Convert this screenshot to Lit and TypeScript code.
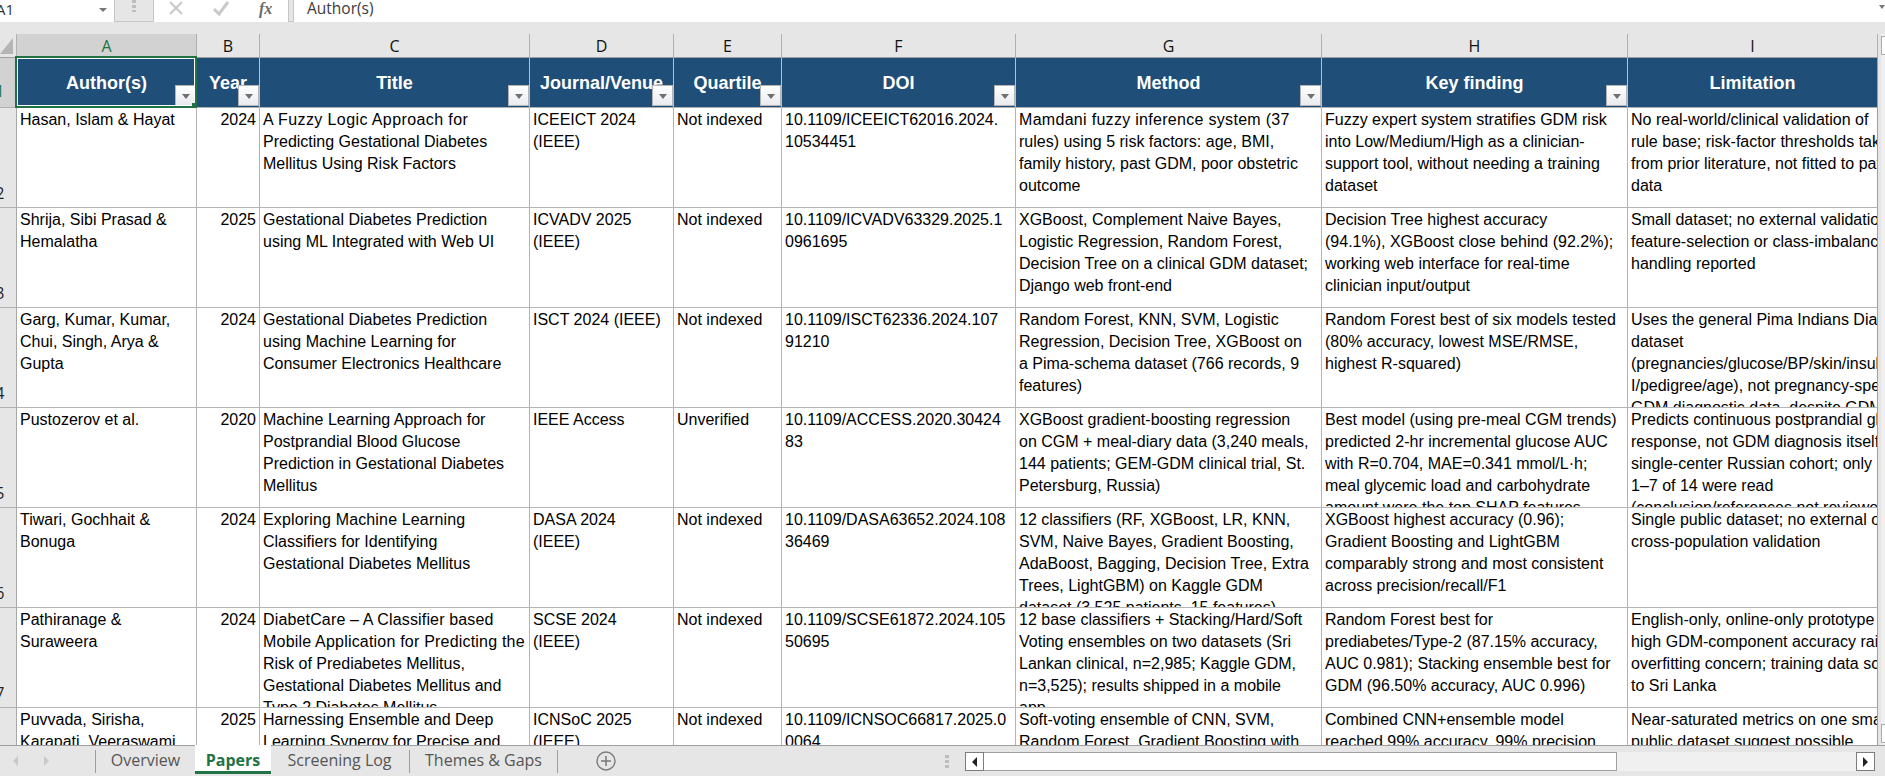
import { LitElement, html, css } from "lit";
import { customElement } from "lit/decorators.js";

const COLS: [string, number, string, boolean][] = [
  ["A", 180, "Author(s)", true],
  ["B", 63, "Year", true],
  ["C", 270, "Title", true],
  ["D", 144, "Journal/Venue", true],
  ["E", 108, "Quartile", true],
  ["F", 234, "DOI", true],
  ["G", 306, "Method", true],
  ["H", 306, "Key finding", true],
  ["I", 250, "Limitation", false],
];

const SPACING: Record<string, number> = {
  "A Fuzzy Logic Approach for": 0.4,
  "Mamdani fuzzy inference system (37": 0.3,
  "Mobile Application for Predicting the": 0.2,
  "DiabetCare – A Classifier based": 0.15,
  "Exploring Machine Learning": 0.15,
};

const ROWS: string[][][] = [
  [
    ["Hasan, Islam & Hayat"],
    ["2024"],
    ["A Fuzzy Logic Approach for", "Predicting Gestational Diabetes", "Mellitus Using Risk Factors"],
    ["ICEEICT 2024", "(IEEE)"],
    ["Not indexed"],
    ["10.1109/ICEEICT62016.2024.", "10534451"],
    ["Mamdani fuzzy inference system (37", "rules) using 5 risk factors: age, BMI,", "family history, past GDM, poor obstetric", "outcome"],
    ["Fuzzy expert system stratifies GDM risk", "into Low/Medium/High as a clinician-", "support tool, without needing a training", "dataset"],
    ["No real-world/clinical validation of", "rule base; risk-factor thresholds taken", "from prior literature, not fitted to patient", "data"],
  ],
  [
    ["Shrija, Sibi Prasad &", "Hemalatha"],
    ["2025"],
    ["Gestational Diabetes Prediction", "using ML Integrated with Web UI"],
    ["ICVADV 2025", "(IEEE)"],
    ["Not indexed"],
    ["10.1109/ICVADV63329.2025.1", "0961695"],
    ["XGBoost, Complement Naive Bayes,", "Logistic Regression, Random Forest,", "Decision Tree on a clinical GDM dataset;", "Django web front-end"],
    ["Decision Tree highest accuracy", "(94.1%), XGBoost close behind (92.2%);", "working web interface for real-time", "clinician input/output"],
    ["Small dataset; no external validation; no", "feature-selection or class-imbalance", "handling reported"],
  ],
  [
    ["Garg, Kumar, Kumar,", "Chui, Singh, Arya &", "Gupta"],
    ["2024"],
    ["Gestational Diabetes Prediction", "using Machine Learning for", "Consumer Electronics Healthcare"],
    ["ISCT 2024 (IEEE)"],
    ["Not indexed"],
    ["10.1109/ISCT62336.2024.107", "91210"],
    ["Random Forest, KNN, SVM, Logistic", "Regression, Decision Tree, XGBoost on", "a Pima-schema dataset (766 records, 9", "features)"],
    ["Random Forest best of six models tested", "(80% accuracy, lowest MSE/RMSE,", "highest R-squared)"],
    ["Uses the general Pima Indians Diabetes", "dataset", "(pregnancies/glucose/BP/skin/insulin/BM", "I/pedigree/age), not pregnancy-specific", "GDM diagnostic data, despite GDM"],
  ],
  [
    ["Pustozerov et al."],
    ["2020"],
    ["Machine Learning Approach for", "Postprandial Blood Glucose", "Prediction in Gestational Diabetes", "Mellitus"],
    ["IEEE Access"],
    ["Unverified"],
    ["10.1109/ACCESS.2020.30424", "83"],
    ["XGBoost gradient-boosting regression", "on CGM + meal-diary data (3,240 meals,", "144 patients; GEM-GDM clinical trial, St.", "Petersburg, Russia)"],
    ["Best model (using pre-meal CGM trends)", "predicted 2-hr incremental glucose AUC", "with R=0.704, MAE=0.341 mmol/L·h;", "meal glycemic load and carbohydrate", "amount were the top SHAP features"],
    ["Predicts continuous postprandial glucose", "response, not GDM diagnosis itself;", "single-center Russian cohort; only pages", "1–7 of 14 were read", "(conclusion/references not reviewed)"],
  ],
  [
    ["Tiwari, Gochhait &", "Bonuga"],
    ["2024"],
    ["Exploring Machine Learning", "Classifiers for Identifying", "Gestational Diabetes Mellitus"],
    ["DASA 2024", "(IEEE)"],
    ["Not indexed"],
    ["10.1109/DASA63652.2024.108", "36469"],
    ["12 classifiers (RF, XGBoost, LR, KNN,", "SVM, Naive Bayes, Gradient Boosting,", "AdaBoost, Bagging, Decision Tree, Extra", "Trees, LightGBM) on Kaggle GDM", "dataset (3,525 patients, 15 features)"],
    ["XGBoost highest accuracy (0.96);", "Gradient Boosting and LightGBM", "comparably strong and most consistent", "across precision/recall/F1"],
    ["Single public dataset; no external or", "cross-population validation"],
  ],
  [
    ["Pathiranage &", "Suraweera"],
    ["2024"],
    ["DiabetCare – A Classifier based", "Mobile Application for Predicting the", "Risk of Prediabetes Mellitus,", "Gestational Diabetes Mellitus and", "Type 2 Diabetes Mellitus"],
    ["SCSE 2024", "(IEEE)"],
    ["Not indexed"],
    ["10.1109/SCSE61872.2024.105", "50695"],
    ["12 base classifiers + Stacking/Hard/Soft", "Voting ensembles on two datasets (Sri", "Lankan clinical, n=2,985; Kaggle GDM,", "n=3,525); results shipped in a mobile", "app"],
    ["Random Forest best for", "prediabetes/Type-2 (87.15% accuracy,", "AUC 0.981); Stacking ensemble best for", "GDM (96.50% accuracy, AUC 0.996)"],
    ["English-only, online-only prototype", "high GDM-component accuracy raises", "overfitting concern; training data scoped", "to Sri Lanka"],
  ],
  [
    ["Puvvada, Sirisha,", "Karapati, Veeraswami"],
    ["2025"],
    ["Harnessing Ensemble and Deep", "Learning Synergy for Precise and"],
    ["ICNSoC 2025", "(IEEE)"],
    ["Not indexed"],
    ["10.1109/ICNSOC66817.2025.0", "0064"],
    ["Soft-voting ensemble of CNN, SVM,", "Random Forest, Gradient Boosting with"],
    ["Combined CNN+ensemble model", "reached 99% accuracy, 99% precision"],
    ["Near-saturated metrics on one small", "public dataset suggest possible"],
  ],
];

@customElement("app-root")
export class AppRoot extends LitElement {
  static styles = css`
    :host {
      display: flex;
      flex-direction: column;
      width: 1885px;
      height: 776px;
      overflow: hidden;
      background: #e6e6e6;
      font-family: "Liberation Sans", Arial, sans-serif;
      color: #000;
    }
    .fbar {
      display: flex;
      height: 22px;
      flex: none;
      box-sizing: border-box;
      border-bottom: 1px solid #c6c6c6;
      gap: 4px;
      position: relative;
    }
    .namebox {
      width: 115px;
      flex: none;
      background: #fff;
      border-right: 1px solid #c6c6c6;
      box-sizing: border-box;
      display: flex;
      align-items: center;
      justify-content: space-between;
      padding-right: 7px;
      font: 15px "Open Sans", sans-serif;
      color: #333;
      overflow: hidden;
      margin-bottom: -1px;
    }
    .namebox span { margin-left: -4px; margin-top: -4px; }
    .tri {
      width: 0;
      height: 0;
      border-left: 4px solid transparent;
      border-right: 4px solid transparent;
      border-top: 4px solid #777;
      margin-top: -3px;
    }
    .grip {
      width: 30px;
      flex: none;
      display: flex;
      justify-content: center;
    }
    .grip i {
      width: 4px;
      height: 12px;
      background: repeating-linear-gradient(#bdbdbd 0 3px, transparent 3px 5px);
    }
    .fbtns {
      width: 136px;
      flex: none;
      background: #fff;
      border-left: 1px solid #c6c6c6;
      border-right: 1px solid #c6c6c6;
      box-sizing: border-box;
      display: flex;
      align-items: center;
      margin-bottom: -1px;
      position: relative;
    }
    .fbtns svg { flex: none; display: block; }
    .fx {
      font: italic bold 16px "Liberation Serif", serif;
      color: #6a6a6a;
      margin-left: 29px;
      margin-top: -4px;
    }
    .finput {
      flex: 1;
      background: #fff;
      border-left: 1px solid #c6c6c6;
      margin-bottom: -1px;
      padding-left: 13px;
      font: 15.5px "Open Sans", sans-serif;
      color: #3c3c3c;
      line-height: 16px;
      position: relative;
    }
    .finput b {
      position: absolute;
      right: 0;
      top: 5px;
      width: 0;
      height: 0;
      border-left: 3px solid transparent;
      border-right: 3px solid transparent;
      border-top: 4px solid #777;
    }
    .spacer { height: 12px; flex: none; }
    .main {
      height: 711px;
      flex: none;
      display: flex;
      overflow: hidden;
    }
    .grid {
      display: grid;
      grid-template-columns: 17px 180px 63px 270px 144px 108px 234px 306px 306px 250px;
      grid-template-rows: 24px 50px repeat(7, 100px);
      width: 1878px;
      flex: none;
      height: 711px;
      overflow: hidden;
      border-right: 0;
    }
    .corner {
      background: #e6e6e6;
      border-right: 1px solid #b0b0b0;
      border-bottom: 1px solid #9e9e9e;
      box-sizing: border-box;
      display: flex;
      align-items: flex-end;
      padding: 0 0 3px 0;
    }
    .corner i {
      width: 13px;
      height: 16px;
      background: #b5b5b5;
      clip-path: polygon(100% 0, 100% 100%, 0 100%);
      display: block;
    }
    .ch {
      background: #e6e6e6;
      border-right: 1px solid #b0b0b0;
      border-bottom: 1px solid #9e9e9e;
      box-sizing: border-box;
      text-align: center;
      font: 16px/25px "Open Sans", sans-serif;
      color: #111;
    }
    .ch.sel { background: #d2d2d2; color: #217346; }
    .rh {
      background: #e6e6e6;
      border-right: 1px solid #a8a8a8;
      border-bottom: 1px solid #b0b0b0;
      box-sizing: border-box;
      overflow: hidden;
      display: flex;
      align-items: flex-end;
      font: 15.5px/20px "Open Sans", sans-serif;
      color: #222;
      padding-bottom: 4px;
    }
    .rh span { display: block; transform: translateX(-50%); }
    .rh.sel { background: #d2d2d2; color: #217346; padding-bottom: 6px; }
    .hc {
      background: #1f4e78;
      color: #fff;
      font-weight: 700;
      font-size: 18px;
      line-height: 51px;
      height: 50px;
      text-align: center;
      border-right: 1px solid #b9c2cc;
      border-bottom: 1px solid #b0b0b0;
      box-sizing: border-box;
      position: relative;
      white-space: nowrap;
    }
    .hc.last { border-right-color: #9e9e9e; }
    .fl {
      position: absolute;
      right: 0;
      bottom: 1px;
      width: 21px;
      height: 21px;
      box-sizing: border-box;
      border: 1px solid #b4b4b4;
      background: linear-gradient(#ffffff, #e9ebf0);
      display: flex;
      align-items: center;
      justify-content: center;
      z-index: 2;
    }
    .fl i {
      width: 0;
      height: 0;
      border-left: 4.5px solid transparent;
      border-right: 4.5px solid transparent;
      border-top: 5px solid #707070;
      margin-top: 1px;
    }
    .selbox {
      position: absolute;
      left: -2px;
      right: -1px;
      top: -2px;
      bottom: -1px;
      border: 2px solid #217346;
      outline: 1px solid #fff;
      outline-offset: -3px;
      z-index: 3;
      pointer-events: none;
    }
    .handle {
      position: absolute;
      right: -2px;
      bottom: -2px;
      width: 5px;
      height: 5px;
      background: #217346;
      border: 0;
    }
    .c {
      background: #fff;
      border-right: 1px solid #b4b4b4;
      border-bottom: 1px solid #b4b4b4;
      box-sizing: border-box;
      overflow: hidden;
      padding: 1px 0 0 3px;
      font-size: 16px;
      line-height: 22px;
      color: #000;
    }
    .c.last { border-right-color: #9e9e9e; }
    .c div { white-space: nowrap; }
    .c.num { text-align: right; padding-right: 3px; padding-left: 0; }
    .vscroll {
      flex: 1;
      padding-left: 3px;
      display: flex;
    }
    .vtrack {
      flex: 1;
      background: #f0f0f0;
      display: flex;
      flex-direction: column;
      justify-content: space-between;
      padding: 2px 0;
    }
    .vbtn {
      height: 19px;
      background: #fff;
      border: 1px solid #ababab;
      border-right: 0;
      box-sizing: border-box;
    }
    .tabs {
      height: 31px;
      flex: none;
      box-sizing: border-box;
      border-top: 1px solid #9e9e9e;
      display: flex;
      font: 16px "Open Sans", sans-serif;
      color: #555;
      background: #e6e6e6;
    }
    .nav {
      width: 95px;
      flex: none;
      display: flex;
      align-items: center;
      box-sizing: border-box;
      padding-left: 13px;
      gap: 26px;
    }
    .nav i {
      width: 0;
      height: 0;
      border-top: 5px solid transparent;
      border-bottom: 5px solid transparent;
    }
    .nav i.l { border-right: 5px solid #c8c8c8; }
    .nav i.r { border-left: 5px solid #c8c8c8; }
    .tablist {
      display: flex;
      align-items: stretch;
      flex: none;
    }
    .tab {
      text-align: center;
      line-height: 20px;
      height: 23px;
      border-left: 1px solid #9e9e9e;
      margin-top: 4px;
      white-space: nowrap;
      box-sizing: border-box;
    }
    .t-overview { width: 100px; }
    .t-papers { width: 76px; }
    .t-log { width: 138px; padding-right: 1px; }
    .t-themes { width: 148px; }
    .tab.active {
      background: #fff;
      color: #217346;
      font-weight: 700;
      border: 0;
      height: 29px;
      margin-top: -1px;
      padding-top: 5px;
      border-bottom: 3px solid #217346;
    }
    .tab.active + .tab { border-left: 0; }
    .tab.end { width: 0; }
    .add {
      margin-left: 38px;
      margin-top: 5px;
      flex: none;
      display: block;
    }
    .hbar {
      position: absolute;
      left: 945px;
      top: 752px;
      width: 930px;
      height: 19px;
      display: flex;
    }
    .hgrip {
      width: 4px;
      height: 13px;
      margin: 3px 16px 0 0;
      background: repeating-linear-gradient(#bdbdbd 0 3px, transparent 3px 5px);
      flex: none;
    }
    .sb {
      width: 19px;
      flex: none;
      box-sizing: border-box;
      border: 1px solid #7d7d7d;
      background: #fff;
      display: flex;
      align-items: center;
      justify-content: center;
    }
    .sb i {
      width: 0;
      height: 0;
      border-top: 5px solid transparent;
      border-bottom: 5px solid transparent;
    }
    .sb.l i { border-right: 5px solid #222; }
    .sb.r i { border-left: 5px solid #222; }
    .track {
      flex: 1;
      background: #f0f0f0;
      display: flex;
    }
    .thumb {
      width: 633px;
      background: #fff;
      border: 1px solid #a0a0a0;
      border-left: 0;
      box-sizing: border-box;
    }
  `;

  private line(l: string) {
    const s = SPACING[l];
    return s
      ? html`<div style="letter-spacing:${s}px">${l}</div>`
      : html`<div>${l}</div>`;
  }

  render() {
    return html`
      <div class="fbar">
        <div class="namebox"><span>A1</span><i class="tri"></i></div>
        <div class="grip"><i></i></div>
        <div class="fbtns">
          <svg width="16" height="16" viewBox="0 0 16 16" style="margin-left:14px;margin-top:-6px">
            <path d="M2 2 L14 14 M14 2 L2 14" stroke="#c9c9c9" stroke-width="2" fill="none" />
          </svg>
          <svg width="18" height="16" viewBox="0 0 18 16" style="margin-left:28px;margin-top:-6px">
            <path d="M2 9 L7 14 L16 2" stroke="#c9c9c9" stroke-width="3" fill="none" />
          </svg>
          <span class="fx">fx</span>
        </div>
        <div class="finput">Author(s)<b></b></div>
      </div>
      <div class="spacer"></div>
      <div class="main">
        <div class="grid">
          <div class="corner"><i></i></div>
          ${COLS.map(
            ([l], i) => html`<div class="ch ${i === 0 ? "sel" : ""}">${l}</div>`
          )}
          <div class="rh sel"><span>1</span></div>
          ${COLS.map(
            ([, , t, f], i) => html`<div class="hc ${i === 8 ? "last" : ""}">
              ${t}${f ? html`<span class="fl"><i></i></span>` : ""}
              ${i === 0 ? html`<span class="selbox"><span class="handle"></span></span>` : ""}
            </div>`
          )}
          ${ROWS.map(
            (r, ri) => html`
              <div class="rh"><span>${ri + 2}</span></div>
              ${r.map(
                (lines, ci) => html`<div class="c ${ci === 1 ? "num" : ""} ${ci === 8 ? "last" : ""}">
                  ${lines.map((l) => this.line(l))}
                </div>`
              )}
            `
          )}
        </div>
        <div class="vscroll">
          <div class="vtrack">
            <div class="vbtn"></div>
            <div class="vbtn"></div>
          </div>
        </div>
      </div>
      <div class="tabs">
        <div class="nav"><i class="l"></i><i class="r"></i></div>
        <div class="tablist">
          <div class="tab t-overview">Overview</div>
          <div class="tab active t-papers">Papers</div>
          <div class="tab t-log">Screening Log</div>
          <div class="tab t-themes">Themes &amp; Gaps</div>
          <div class="tab end"></div>
        </div>
        <svg class="add" width="20" height="20" viewBox="0 0 20 20">
          <circle cx="10" cy="10" r="9" fill="none" stroke="#7a7a7a" stroke-width="1.4" />
          <path d="M5 10 H15 M10 5 V15" stroke="#7a7a7a" stroke-width="1.5" fill="none" />
        </svg>
      </div>
      <div class="hbar">
        <div class="hgrip"></div>
        <div class="sb l"><i></i></div>
        <div class="track"><div class="thumb"></div></div>
        <div class="sb r"><i></i></div>
      </div>
    `;
  }
}
